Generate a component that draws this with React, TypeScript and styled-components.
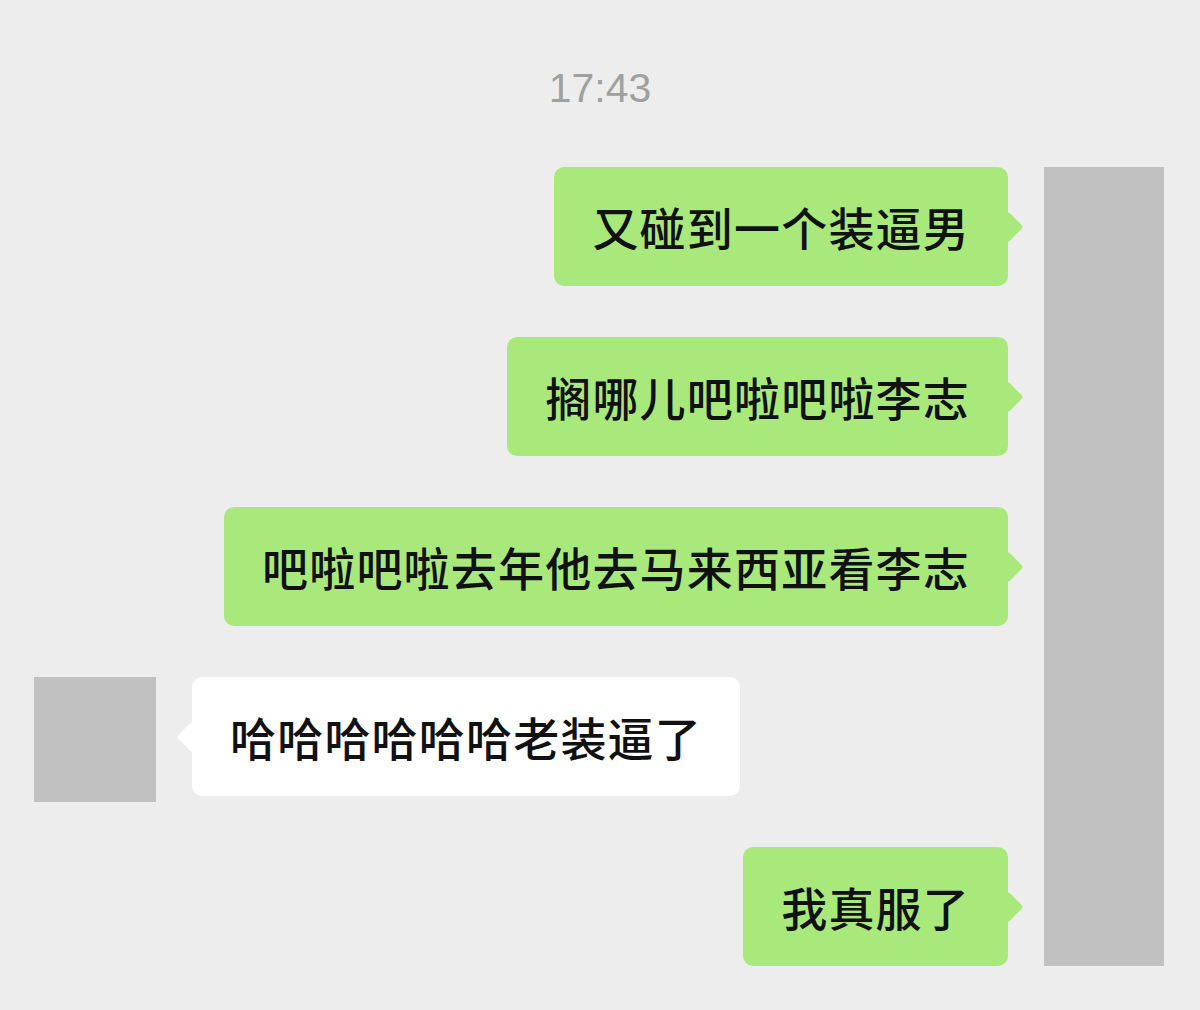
import styled, { createGlobalStyle } from "styled-components";

const GlobalStyle = createGlobalStyle`
  html, body {
    margin: 0;
    padding: 0;
    background: #ededed;
  }
  body {
    font-family: "Noto Sans CJK SC", "Noto Sans", sans-serif;
  }
`;

interface Message {
  text: string;
  mine: boolean;
}

const messages: Message[] = [
  { text: "又碰到一个装逼男", mine: true },
  { text: "搁哪儿吧啦吧啦李志", mine: true },
  { text: "吧啦吧啦去年他去马来西亚看李志", mine: true },
  { text: "哈哈哈哈哈哈老装逼了", mine: false },
  { text: "我真服了", mine: true },
];

export default function App() {
  return (
    <>
      <GlobalStyle />
      <Screen>
        <TimeStamp>17:43</TimeStamp>
        <Thread>
          <MessageList>
            {messages.map((m, i) => (
              <Row key={i} mine={m.mine}>
                {!m.mine && <Avatar />}
                <Bubble mine={m.mine}>{m.text}</Bubble>
              </Row>
            ))}
          </MessageList>
          <SelfAvatar />
        </Thread>
      </Screen>
    </>
  );
}

const Screen = styled.div`
  width: 1200px;
  height: 1010px;
  overflow: hidden;
  display: flex;
  flex-direction: column;
`;

const TimeStamp = styled.div`
  padding-top: 60px;
  margin-bottom: 51px;
  height: 56px;
  line-height: 56px;
  text-align: center;
  font-family: "Liberation Sans", Arial, sans-serif;
  font-size: 41px;
  color: #a0a0a0;
`;

const Thread = styled.div`
  display: flex;
  gap: 36px;
  padding: 0 36px 0 34px;
`;

const MessageList = styled.div`
  flex: 1;
  display: flex;
  flex-direction: column;
  gap: 51px;
`;

const Row = styled.div<{ mine: boolean }>`
  display: flex;
  height: 119px;
  gap: 36px;
  align-items: flex-start;
  justify-content: ${(p) => (p.mine ? "flex-end" : "flex-start")};
`;

const Avatar = styled.div`
  width: 122px;
  height: 125px;
  flex-shrink: 0;
  background: #c1c1c1;
`;

const SelfAvatar = styled.div`
  width: 120px;
  flex-shrink: 0;
  background: #c1c1c1;
`;

const Bubble = styled.div<{ mine: boolean }>`
  position: relative;
  box-sizing: border-box;
  height: 119px;
  padding: 30px 38px 31px 38px;
  border-radius: 10px;
  background: ${(p) => (p.mine ? "#a9e97b" : "#ffffff")};
  color: #111111;
  font-size: 46px;
  line-height: 58px;
  font-weight: 500;
  letter-spacing: 1.2px;
  white-space: nowrap;

  &::after {
    content: "";
    position: absolute;
    top: 50%;
    ${(p) => (p.mine ? "right: -11px;" : "left: -11px;")}
    width: 22px;
    height: 22px;
    border-radius: 3px;
    background: inherit;
    transform: translateY(-50%) rotate(45deg);
  }
`;
